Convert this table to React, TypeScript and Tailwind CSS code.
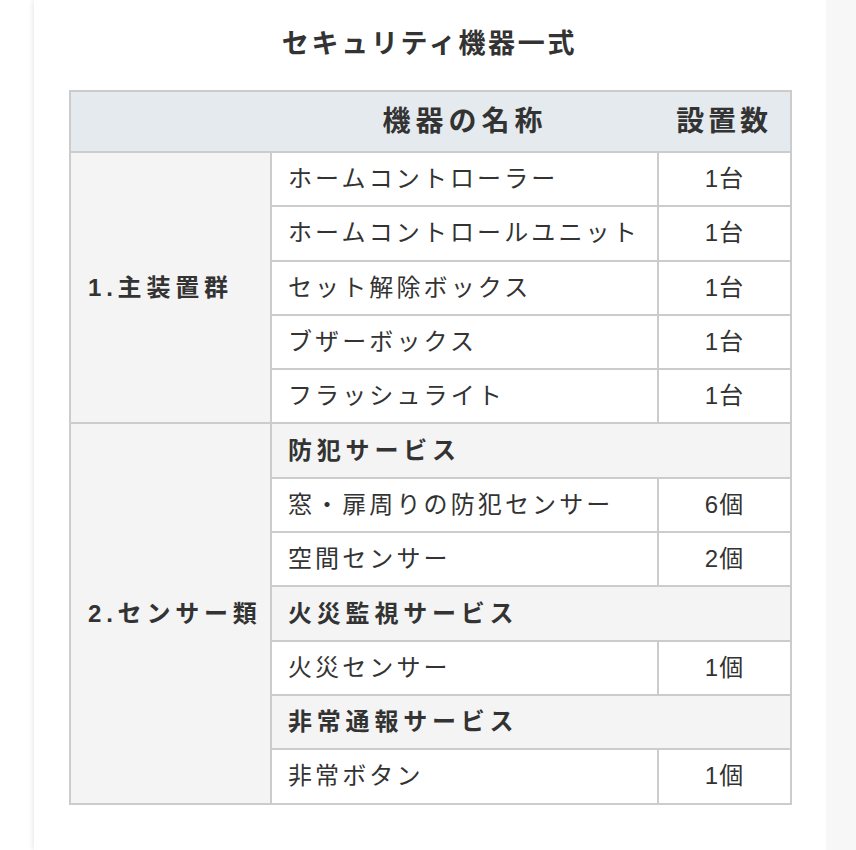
const FONT = { fontFamily: '"Liberation Sans", "Noto Sans CJK JP", sans-serif' }

type Row =
  | { kind: "item"; name: string; qty: string }
  | { kind: "section"; name: string }

const GROUPS: { label: string; rows: Row[] }[] = [
  {
    label: "1.主装置群",
    rows: [
      { kind: "item", name: "ホームコントローラー", qty: "1台" },
      { kind: "item", name: "ホームコントロールユニット", qty: "1台" },
      { kind: "item", name: "セット解除ボックス", qty: "1台" },
      { kind: "item", name: "ブザーボックス", qty: "1台" },
      { kind: "item", name: "フラッシュライト", qty: "1台" },
    ],
  },
  {
    label: "2.センサー類",
    rows: [
      { kind: "section", name: "防犯サービス" },
      { kind: "item", name: "窓・扉周りの防犯センサー", qty: "6個" },
      { kind: "item", name: "空間センサー", qty: "2個" },
      { kind: "section", name: "火災監視サービス" },
      { kind: "item", name: "火災センサー", qty: "1個" },
      { kind: "section", name: "非常通報サービス" },
      { kind: "item", name: "非常ボタン", qty: "1個" },
    ],
  },
]

const cell = "border-2 border-[#cccccc] h-[54.3px] p-0"

export default function App() {
  return (
    <div className="flex min-h-[850px] bg-white text-[#333333]" style={FONT}>
      <div className="w-[34px] shrink-0" />
      <div className="w-[792px] shrink-0 bg-white shadow-[0_0_6px_rgba(0,0,0,0.14)] pt-[24px] pb-[40px] pl-[35px]">
        <h1 className="w-[721px] text-center text-[27px] font-bold tracking-[0.1em] leading-[40px]">
          セキュリティ機器一式
        </h1>
        <table className="mt-[26px] w-[721px] table-fixed border-collapse border-2 border-[#cccccc]">
          <colgroup>
            <col className="w-[201px]" />
            <col className="w-[387px]" />
            <col className="w-[133px]" />
          </colgroup>
          <thead>
            <tr className="bg-[#e5eaee]">
              <th
                colSpan={2}
                className="h-[61px] border-y-2 border-[#cccccc] pl-[201px] text-center text-[28px] font-bold tracking-[0.18em]"
              >
                機器の名称
              </th>
              <th className="h-[61px] border-y-2 border-[#cccccc] text-center text-[28px] font-bold tracking-[0.14em]">
                設置数
              </th>
            </tr>
          </thead>
          <tbody className="text-[24px] tracking-[0.13em]">
            {GROUPS.map((g) =>
              g.rows.map((r, i) => (
                <tr key={g.label + i}>
                  {i === 0 && (
                    <td
                      rowSpan={g.rows.length}
                      className={`${cell} bg-[#f4f4f4] pl-[17px] font-bold tracking-[0.2em]`}
                    >
                      {g.label}
                    </td>
                  )}
                  {r.kind === "section" ? (
                    <td colSpan={2} className={`${cell} bg-[#f4f4f4] pl-[16px] font-bold tracking-[0.2em]`}>
                      {r.name}
                    </td>
                  ) : (
                    <>
                      <td className={`${cell} pl-[16px]`}>{r.name}</td>
                      <td className={`${cell} text-center tracking-[0.05em]`}>{r.qty}</td>
                    </>
                  )}
                </tr>
              ))
            )}
          </tbody>
        </table>
      </div>
      <div className="flex-1 bg-[#f7f7f7]" />
    </div>
  )
}
